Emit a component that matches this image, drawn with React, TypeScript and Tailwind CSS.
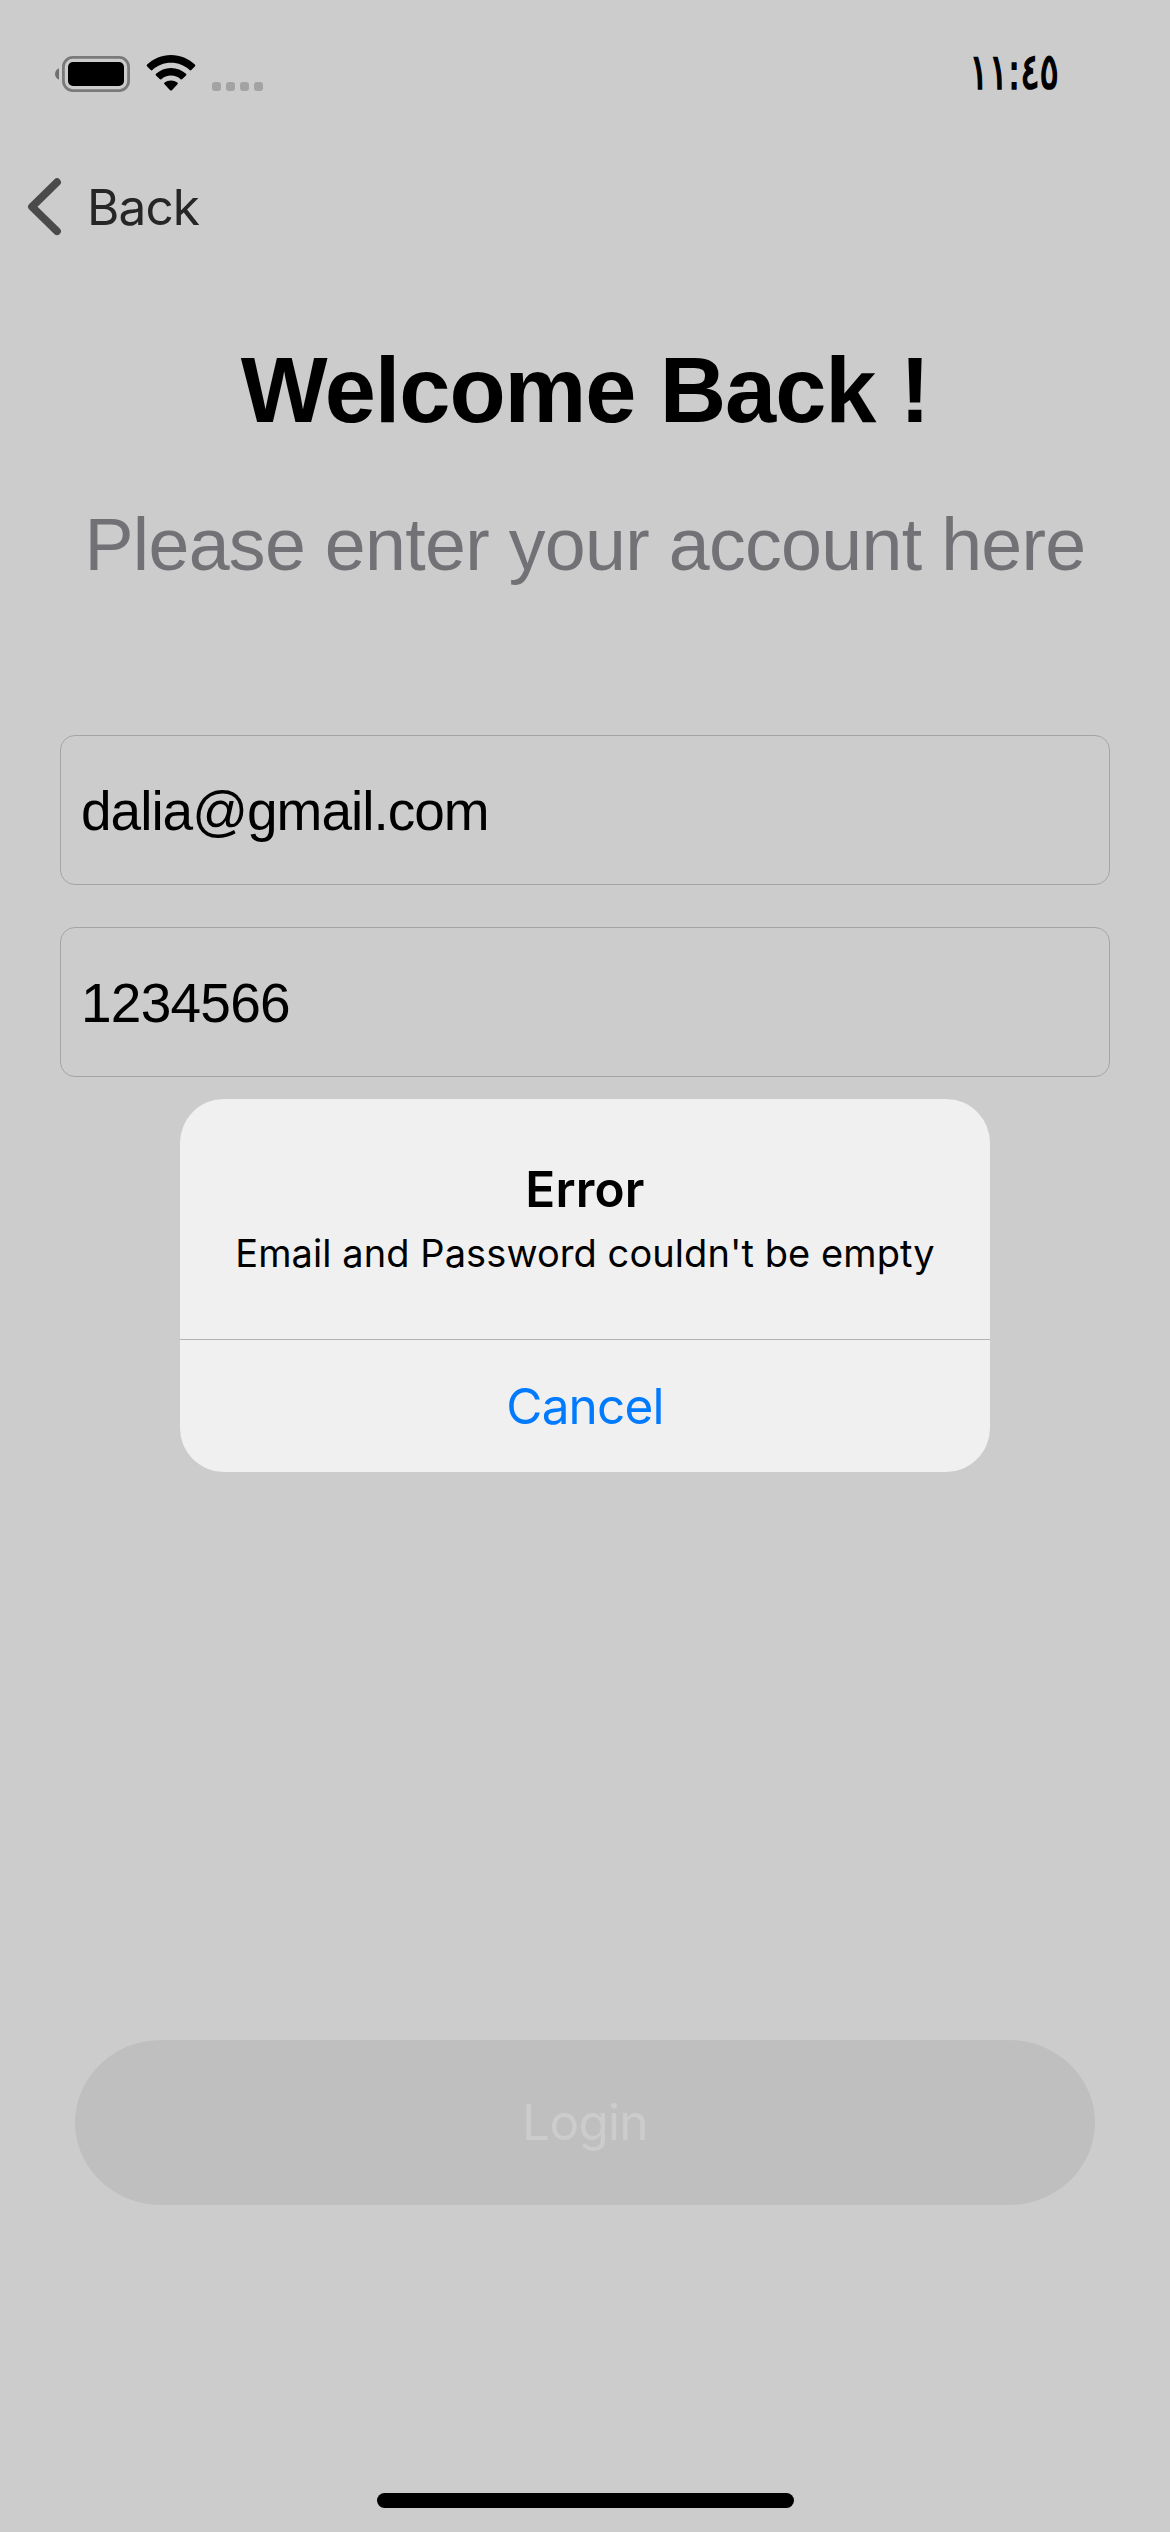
import type { ReactNode } from 'react';

function StatusIcons() {
  return (
    <div className="flex h-[37px] items-end">
      <svg width="76" height="37" viewBox="55 55 76 37" aria-label="Battery">
        <path d="M59 68.2v11.6c-2.300-1-4-3.200-4-5.800s1.700-4.800 4-5.800z" fill="#6f6f6f" />
        <rect x="63.400" y="57.400" width="65.200" height="33.200" rx="9.500" fill="none" stroke="#7a7a7a" strokeWidth="2.800" />
        <rect x="68" y="62" width="56" height="24" rx="5" fill="#000" />
      </svg>
      <svg className="ml-[15px]" width="50" height="37" viewBox="146 55 50 37" aria-label="Wi-Fi">
        <path d="M171 55c9.200 0 17.600 3.600 23.900 9.500.5.500.5 1.200.1 1.700l-3.700 3.800c-.5.500-1.200.5-1.700 0-4.900-4.500-11.400-7.200-18.600-7.200s-13.700 2.700-18.600 7.200c-.5.500-1.200.5-1.700 0l-3.700-3.800c-.4-.5-.4-1.200.1-1.700C153.400 58.600 161.800 55 171 55z" />
        <path d="M171 67.900c5.800 0 11 2.200 15 5.800.5.500.5 1.200 0 1.700l-3.700 3.700c-.5.500-1.200.5-1.700.1-2.600-2.200-5.900-3.600-9.600-3.600s-7 1.400-9.600 3.600c-.5.400-1.200.4-1.700-.1l-3.700-3.700c-.5-.5-.5-1.200 0-1.700 4-3.600 9.200-5.800 15-5.800z" />
        <path d="M171 80.400c2.400 0 4.600.8 6.400 2.200.6.500.6 1.200.1 1.700l-5.600 5.900c-.5.500-1.300.5-1.800 0l-5.600-5.900c-.5-.5-.5-1.200.1-1.700 1.800-1.400 4-2.200 6.400-2.200z" />
      </svg>
      <div className="mb-px ml-4 flex gap-[5px]">
        {[0, 1, 2, 3].map((dot) => (
          <span key={dot} className="size-[9px] rounded-[3px] bg-[#a3a3a3]" />
        ))}
      </div>
    </div>
  );
}

function Field({ className, children }: { className: string; children: ReactNode }) {
  return (
    <div
      className={`flex h-[150px] items-center rounded-[15px] border border-[#a5a5a5] px-5 pt-0.5 font-['Liberation_Sans',sans-serif] text-[55px] leading-[64px] ${className}`}
    >
      {children}
    </div>
  );
}

export default function App() {
  return (
    <div className="relative flex h-[2532px] w-[1170px] flex-col overflow-hidden bg-[#cccccc] font-[Inter,sans-serif] text-black">
      <header className="flex h-[147px] items-center justify-between pr-[111px] pl-[55px]">
        <StatusIcons />
        <span
          dir="ltr"
          className="mb-1 origin-right scale-x-80 font-['DejaVu_Sans_Condensed','DejaVu_Sans',sans-serif] text-[50px] leading-[60px] tracking-[-4px] [-webkit-text-stroke:1.6px_black]"
        >
          ١١:٤٥
        </span>
      </header>

      <nav className="flex h-[120px] items-center pl-[27px]">
        <svg width="35" height="60" viewBox="27 177 35 60" fill="none" stroke="#4a4a4a" strokeWidth="7.800" strokeLinecap="round" strokeLinejoin="round">
          <path d="M57 182.200L32 206.700L57 231.200" />
        </svg>
        <span className="ml-[25px] text-[49.5px] leading-[60px] tracking-[-0.9px] text-[#262626]">Back</span>
      </nav>

      <main className="flex flex-col">
        <h1 className="mt-[68px] text-center font-['Liberation_Sans',sans-serif] text-[92px] leading-[110px] font-bold tracking-[-1.1px]">
          Welcome Back !
        </h1>
        <p className="mt-[55px] text-center font-['Liberation_Sans',sans-serif] text-[73.5px] leading-[90px] tracking-[-0.68px] whitespace-nowrap text-[#727276]">
          Please enter your account here
        </p>
        <div className="mx-[60px] mt-[145px] flex flex-col gap-[42px]">
          <Field className="tracking-[-1px]">dalia@gmail.com</Field>
          <Field className="tracking-[-0.75px]">1234566</Field>
        </div>
      </main>

      <button className="mx-[75px] mt-[963px] h-[165px] rounded-[86px/82.5px] bg-[#bfbfbf] pb-0.5 text-[49.5px] leading-[60px] tracking-[-0.7px] text-[#cccccc]">
        Login
      </button>

      <div className="mx-auto mt-auto mb-6 h-[15px] w-[417px] rounded-full bg-black" />

      <div role="alertdialog" className="absolute top-[1099px] left-[180px] flex h-[373px] w-[810px] flex-col rounded-[44px] bg-[#f0f0f0] text-center">
        <div className="flex h-[241px] flex-col border-b border-[#b2b2b2] pt-[60px]">
          <h2 className="text-[49.5px] leading-[60px] font-semibold tracking-[0.2px]">Error</h2>
          <p className="mt-2.5 text-[38px] leading-[48px] tracking-[0.08px]">Email and Password couldn't be empty</p>
        </div>
        <button className="h-[132px] text-[49.5px] leading-[60px] tracking-[-0.84px] text-[#007aff]">Cancel</button>
      </div>
    </div>
  );
}
